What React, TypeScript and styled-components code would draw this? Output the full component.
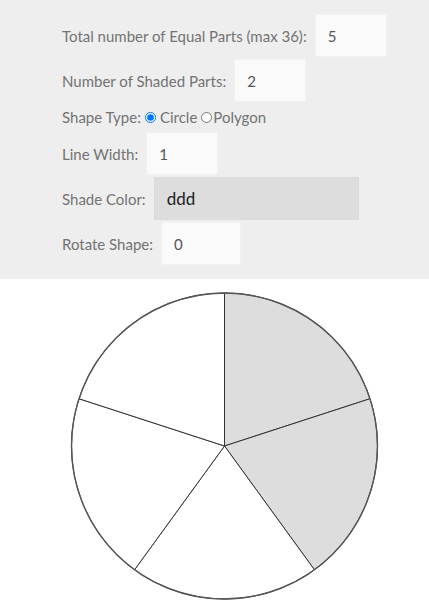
import React, { useState } from "react";
import styled, { createGlobalStyle } from "styled-components";

const GlobalStyle = createGlobalStyle`
  body {
    margin: 0;
    background: #fff;
    font-family: Lato, "Open Sans", sans-serif;
  }
`;

const Panel = styled.section`
  background: #eeeeee;
  padding: 14px 0 14px 62px;
  display: flex;
  flex-direction: column;
  gap: 2px;
`;

const Row = styled.div`
  display: flex;
  align-items: center;
  gap: 8px;
  color: #737373;
  font-size: 15px;
  line-height: 18px;
`;

const RadioRow = styled(Row)`
  gap: 0;
  height: 26px;
`;

const Field = styled.input<{ $w?: number; $shade?: boolean }>`
  box-sizing: border-box;
  width: ${p => p.$w ?? 72}px;
  height: 43px;
  margin: 0;
  border: 1px solid ${p => (p.$shade ? "#dadada" : "#f2f2f2")};
  background: ${p => (p.$shade ? "#dddddd" : "#fafafa")};
  padding: 0 12px;
  font-family: Lato, "Open Sans", sans-serif;
  font-size: ${p => (p.$shade ? "17px" : "15px")};
  color: ${p => (p.$shade ? "#222" : "#555")};
  outline: none;
`;

const Radio = styled.input<{ $tight?: boolean }>`
  margin: 0 ${p => (p.$tight ? 1 : 4)}px 0 4px;
  width: 11px;
  height: 11px;
`;

const Canvas = styled.svg`
  display: block;
`;

const PARTS = 5;
const SHADED = 2;
const CX = 224.5;
const CY = 167;
const R = 153;

const pt = (i: number) => {
  const a = -Math.PI / 2 + (i * 2 * Math.PI) / PARTS;
  return [CX + R * Math.cos(a), CY + R * Math.sin(a)];
};

const FractionCircle: React.FC = () => {
  const slices = [];
  for (let i = 0; i < PARTS; i++) {
    const [x1, y1] = pt(i);
    const [x2, y2] = pt(i + 1);
    slices.push(
      <path
        key={i}
        d={`M${CX} ${CY} L${x1} ${y1} A${R} ${R} 0 0 1 ${x2} ${y2} Z`}
        fill={i < SHADED ? "#dddddd" : "#ffffff"}
        stroke="#333"
        strokeWidth={1}
      />
    );
  }
  return (
    <Canvas width={429} height={327}>
      {slices}
      <circle cx={CX} cy={CY} r={R} fill="none" stroke="#555" strokeWidth={1.4} />
    </Canvas>
  );
};

export default function App() {
  const [shape, setShape] = useState("circle");
  return (
    <>
      <GlobalStyle />
      <Panel>
        <Row>
          Total number of Equal Parts (max 36):
          <Field defaultValue="5" />
        </Row>
        <Row>
          Number of Shaded Parts:
          <Field defaultValue="2" />
        </Row>
        <RadioRow>
          Shape Type:
          <Radio type="radio" checked={shape === "circle"} onChange={() => setShape("circle")} />
          Circle
          <Radio type="radio" $tight checked={shape === "polygon"} onChange={() => setShape("polygon")} />
          Polygon
        </RadioRow>
        <Row>
          Line Width:
          <Field defaultValue="1" />
        </Row>
        <Row>
          Shade Color:
          <Field $w={205} $shade defaultValue="ddd" />
        </Row>
        <Row>
          Rotate Shape:
          <Field $w={80} defaultValue="0" />
        </Row>
      </Panel>
      <FractionCircle />
    </>
  );
}
